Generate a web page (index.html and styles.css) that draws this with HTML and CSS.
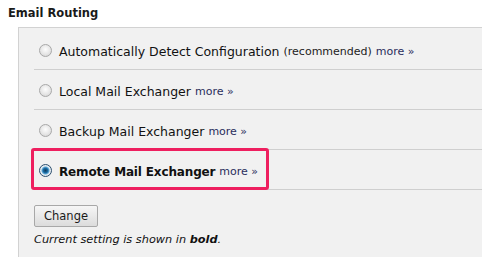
FILE: index.html
```html
<!DOCTYPE html>
<html>
<head>
<meta charset="utf-8">
<link rel="stylesheet" href="styles.css">
</head>
<body>
<h2 class="title">Email Routing</h2>
<div class="panel">
  <div class="options">
    <label class="row"><span class="radio"></span><span class="label">Automatically Detect Configuration</span><span class="note">(recommended)</span><a class="more">more &raquo;</a></label>
    <label class="row"><span class="radio"></span><span class="label">Local Mail Exchanger</span><a class="more">more &raquo;</a></label>
    <label class="row"><span class="radio"></span><span class="label">Backup Mail Exchanger</span><a class="more">more &raquo;</a></label>
    <label class="row current"><span class="radio checked"></span><span class="label bold">Remote Mail Exchanger</span><a class="more">more &raquo;</a><span class="highlight"></span></label>
  </div>
  <button class="btn">Change</button>
  <p class="caption">Current setting is shown in <b>bold</b>.</p>
</div>
</body>
</html>
```
FILE: styles.css
```css
html, body { margin: 0; padding: 0; background: #fff; }
body {
  font-family: "DejaVu Sans", Verdana, sans-serif;
  color: #000;
  overflow: hidden;
  width: 482px;
  height: 257px;
}
.title {
  margin: 0;
  padding: 6px 0 0 8px;
  height: 21px;
  box-sizing: border-box;
  font-size: 11.5px;
  font-weight: bold;
  color: #1a1a1a;
}
.panel {
  margin-left: 18px;
  margin-top: 6px;
  border-top: 1px solid #d2d2d2;
  border-left: 1px solid #d2d2d2;
  background: #f1f1f1;
  padding: 2px 0 20px 15px;
  height: 230px;
  box-sizing: border-box;
}
.options { display: flex; flex-direction: column; }
.row {
  position: relative;
  display: flex;
  align-items: center;
  height: 40px;
  border-bottom: 1px solid #cfcfcf;
  box-sizing: border-box;
  padding: 4px 0 0 5px;
  font-size: 12.5px;
  white-space: nowrap;
}
.radio {
  width: 11px;
  height: 11px;
  border-radius: 50%;
  border: 1px solid #a8a8a8;
  background: radial-gradient(circle at 50% 40%, #fdfdfd 0%, #e4e4e4 60%, #cfcfcf 100%);
  margin-right: 7px;
  flex: none;
  position: relative;
  top: -1px;
}
.radio.checked {
  border-color: #2c4f6e;
  background: radial-gradient(circle at 50% 50%, #0f3b5e 0%, #1b6aa1 30%, #5fa9d8 45%, #e8eef3 58%, #d8dde2 100%);
}
.label { color: #111; }
.bold { font-weight: bold; font-size: 12px; letter-spacing: -0.15px; }
.note { font-size: 11px; color: #222; margin-left: 4px; }
.more { font-size: 11px; color: #2a2e5c; text-decoration: none; margin-left: 4px; }
.highlight {
  position: absolute;
  left: -3px;
  top: -2px;
  width: 238px;
  height: 42px;
  border: 3px solid #ee1f5f;
  border-radius: 3px;
  box-sizing: border-box;
}
.btn {
  display: block;
  margin-top: 15px;
  width: 64px;
  height: 22px;
  font-family: "DejaVu Sans", Verdana, sans-serif;
  font-size: 11.5px;
  color: #1a1a1a;
  border: 1px solid #a8a8a8;
  border-radius: 2px;
  background: linear-gradient(#f6f6f6, #dcdcdc);
  padding: 0;
}
.caption {
  margin: 6px 0 0;
  font-size: 11.3px;
  font-style: italic;
  color: #111;
}
```
